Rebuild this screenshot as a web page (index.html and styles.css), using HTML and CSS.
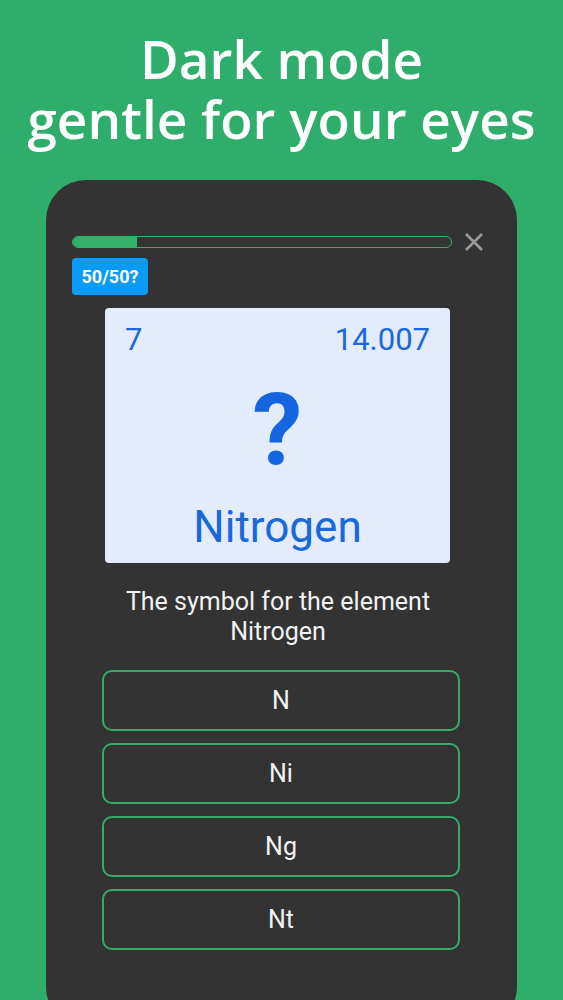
FILE: index.html
```html
<!DOCTYPE html>
<html>
<head>
<meta charset="utf-8">
<link rel="stylesheet" href="styles.css">
</head>
<body>
<h1 class="title">Dark mode<br>gentle for your eyes</h1>
<div class="phone">
  <div class="top-row">
    <div class="progress"><div class="progress-fill" style="width:64px"></div></div>
    <svg class="close" viewBox="0 0 20 20" width="20" height="20"><path d="M2 2 L18 18 M18 2 L2 18" stroke="#9a9a9a" stroke-width="2.6" stroke-linecap="butt" fill="none"/></svg>
  </div>
  <div class="hint">50/50?</div>
  <div class="card">
    <div class="card-top"><span>7</span><span>14.007</span></div>
    <div class="card-q">?</div>
    <div class="card-name">Nitrogen</div>
  </div>
  <p class="question">The symbol for the element<br>Nitrogen</p>
  <div class="options">
    <div class="option">N</div>
    <div class="option">Ni</div>
    <div class="option">Ng</div>
    <div class="option">Nt</div>
  </div>
</div>
</body>
</html>
```
FILE: styles.css
```css
html, body {
  margin: 0;
  padding: 0;
}
body {
  background: #2eae6a;
  width: 563px;
  height: 1000px;
  overflow: hidden;
  font-family: Roboto, "Liberation Sans", sans-serif;
}
.title {
  margin: 0;
  padding-top: 29px;
  font-family: "Open Sans", sans-serif;
  font-weight: 600;
  font-size: 53px;
  line-height: 60px;
  color: #ffffff;
  text-align: center;
}
.phone {
  margin: 31px 0 0 46px;
  width: 471px;
  height: 847px;
  box-sizing: border-box;
  background: #333333;
  border-radius: 40px;
  padding: 51px 0 0 26px;
}
.top-row {
  display: flex;
  align-items: center;
  height: 22px;
}
.progress {
  width: 380px;
  height: 12px;
  box-sizing: border-box;
  border: 1px solid #33b06a;
  border-radius: 6px;
  overflow: hidden;
}
.progress-fill {
  height: 100%;
  background: #33b06a;
}
.close {
  margin-left: 12px;
}
.hint {
  margin-top: 5px;
  width: 76px;
  height: 37px;
  background: #0a9bf7;
  border-radius: 4px;
  color: #ffffff;
  font-weight: 700;
  font-size: 18px;
  display: flex;
  align-items: center;
  justify-content: center;
}
.card {
  margin: 13px 0 0 33px;
  width: 345px;
  height: 255px;
  box-sizing: border-box;
  background: #e3ecfc;
  border-radius: 4px;
  padding: 12px 20px 0 20px;
  color: #1a68dc;
  display: flex;
  flex-direction: column;
}
.card-top {
  display: flex;
  justify-content: space-between;
  font-size: 31px;
  line-height: 40px;
}
.card-q {
  text-align: center;
  font-weight: 700;
  font-size: 100px;
  line-height: 100px;
  margin-top: 20px;
  color: #1565e0;
}
.card-name {
  text-align: center;
  font-size: 44px;
  line-height: 52px;
  margin-top: 21px;
}
.question {
  margin: 24px 0 0 0;
  width: 412px;
  text-align: center;
  color: #f2f2f2;
  font-size: 25px;
  line-height: 30px;
}
.options {
  margin: 23px 0 0 30px;
  width: 358px;
  display: flex;
  flex-direction: column;
  gap: 12px;
}
.option {
  height: 61px;
  box-sizing: border-box;
  border: 2px solid #3aa96b;
  border-radius: 10px;
  color: #f2f2f2;
  font-size: 25px;
  display: flex;
  align-items: center;
  justify-content: center;
}
```
